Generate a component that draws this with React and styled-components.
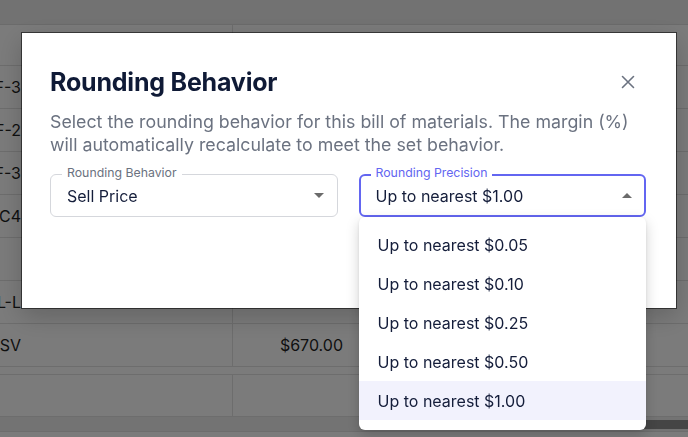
import React from 'react';
import styled, { createGlobalStyle } from 'styled-components';

const GlobalStyle = createGlobalStyle`
    html, body {
        margin: 0;
        padding: 0;
        width: 688px;
        height: 437px;
        overflow: hidden;
        background: #f7f7f7;
        font-family: Inter, "Noto Sans", "Liberation Sans", sans-serif;
    }
`;

const StPage = styled.div`
    width: 688px;
    height: 437px;
    background: #f7f7f7;
`;

const StTopBand = styled.div`
    height: 24px;
    background: #e4e4e4;
    border-bottom: 1px solid #d6d6d6;
`;

const StRow = styled.div`
    display: grid;
    grid-template-columns: 21px 211px 123px 1fr;
    height: ${props => props.height || 42}px;
    background: ${props => props.bg || '#f7f7f7'};
    border-bottom: 1px solid #dadada;
    box-sizing: border-box;
`;

const StSkuTail = styled.div`
    display: flex;
    justify-content: flex-end;
    align-items: center;
    overflow: hidden;
    white-space: nowrap;
    font-size: 16px;
    color: #1f1f1f;
`;

const StCell = styled.div`
    display: flex;
    align-items: center;
    justify-content: flex-end;
    padding-right: 12px;
    font-size: 16px;
    color: #1f1f1f;
    border-left: ${props => (props.divider ? '1px solid #dadada' : 'none')};
`;

const StScrollTrack = styled.div`
    display: flex;
    height: 15px;
    background: #e6e6e6;
    border-bottom: 1px solid #dadada;
    align-items: flex-start;
    padding: 3px 0 0 400px;
    box-sizing: border-box;
`;

const StScrollThumb = styled.div`
    flex: 1;
    height: 9px;
    background: #8a8a8a;
`;

const StBackdrop = styled.div`
    position: fixed;
    inset: 0;
    background: rgba(0, 0, 0, 0.5);
    display: flex;
    align-items: flex-start;
    padding: 33px 0 0 22px;
`;

const StModal = styled.div`
    width: 654px;
    box-sizing: border-box;
    background: #ffffff;
    padding: 34px 30px 91px 28px;
    box-shadow: 0 0 0 1px rgba(0, 0, 0, 0.55), 0 8px 24px rgba(0, 0, 0, 0.2);
`;

const StHeader = styled.div`
    display: flex;
    align-items: center;
    justify-content: space-between;
    height: 30px;
`;

const StTitle = styled.h2`
    margin: 0;
    font-size: 25px;
    font-weight: 700;
    letter-spacing: -0.2px;
    color: #0f1a36;
`;

const StClose = styled.button`
    display: flex;
    align-items: center;
    justify-content: center;
    width: 28px;
    height: 28px;
    margin-right: 4px;
    padding: 0;
    border: none;
    background: none;
    color: #6b7280;
`;

const StDescription = styled.p`
    margin: 13px 0 0;
    font-size: 17.8px;
    line-height: 23px;
    color: #6b7280;
`;

const StFields = styled.div`
    display: flex;
    gap: 21px;
    margin-top: 18px;
`;

const StField = styled.div`
    position: relative;
    flex: 1;
`;

const StSelect = styled.div`
    display: flex;
    align-items: center;
    justify-content: space-between;
    height: 43px;
    box-sizing: border-box;
    padding: 0 ${props => (props.open ? 12 : 13)}px 0 ${props => (props.open ? 15 : 16)}px;
    border: ${props => (props.open ? '2px solid #6366f1' : '1px solid #d5d7dc')};
    border-radius: 6px;
    font-size: 16px;
    color: #141d3a;
`;

const StLabel = styled.span`
    position: absolute;
    top: -9px;
    left: 12px;
    padding: 0 5px;
    background: #ffffff;
    font-size: 12.3px;
    line-height: 15px;
    color: ${props => (props.active ? '#6366f1' : '#6b7280')};
`;

const StArrow = styled.span`
    width: 0;
    height: 0;
    border-left: 5px solid transparent;
    border-right: 5px solid transparent;
    ${props => (props.up ? 'border-bottom: 5px solid #6b6b6b;' : 'border-top: 5px solid #6b6b6b;')}
`;

const StMenu = styled.ul`
    position: absolute;
    top: 100%;
    left: 0;
    right: 0;
    margin: 0;
    padding: 8px 0 10px;
    list-style: none;
    background: #ffffff;
    border-radius: 6px;
    box-shadow: 0 5px 14px rgba(0, 0, 0, 0.18), 0 1px 3px rgba(0, 0, 0, 0.08);
    z-index: 2;
`;

const StOption = styled.li`
    height: 39px;
    display: flex;
    align-items: center;
    padding-left: 19px;
    font-size: 16px;
    color: #141d3a;
    background: ${props => (props.selected ? '#f2f2fd' : 'transparent')};
`;

const rows = [
    { sku: '' },
    { sku: 'BRF-3' },
    { sku: 'BRF-2' },
    { sku: 'BRF-3' },
    { sku: 'PC4' },
    { sku: '' },
    { sku: 'L-L' },
    { sku: 'PSV', price: '$670.00' },
];

const options = ['$0.05', '$0.10', '$0.25', '$0.50', '$1.00'];

const CloseIcon = () => (
    <svg width="14" height="14" viewBox="0 0 14 14" fill="none">
        <path d="M1.5 1.5L12.5 12.5M12.5 1.5L1.5 12.5" stroke="currentColor" strokeWidth="1.6" strokeLinecap="round" />
    </svg>
);

const App = () => {
    const selected = '$1.00';

    return (
        <StPage>
            <GlobalStyle />
            <StTopBand />
            {rows.map((row, i) => (
                <StRow key={i} height={i === 0 ? 41 : 43}>
                    <StSkuTail>{row.sku}</StSkuTail>
                    <div />
                    <StCell divider>{row.price}</StCell>
                    <div />
                </StRow>
            ))}
            <StRow height={8} />
            <StRow height={42}>
                <div />
                <div />
                <StCell divider />
                <div />
            </StRow>
            <StScrollTrack>
                <StScrollThumb />
            </StScrollTrack>

            <StBackdrop>
                <StModal>
                    <StHeader>
                        <StTitle>Rounding Behavior</StTitle>
                        <StClose aria-label="Close">
                            <CloseIcon />
                        </StClose>
                    </StHeader>
                    <StDescription>
                        Select the rounding behavior for this bill of materials. The margin (%) will automatically
                        recalculate to meet the set behavior.
                    </StDescription>
                    <StFields>
                        <StField>
                            <StLabel>Rounding Behavior</StLabel>
                            <StSelect>
                                <span>Sell Price</span>
                                <StArrow />
                            </StSelect>
                        </StField>
                        <StField>
                            <StLabel active>Rounding Precision</StLabel>
                            <StSelect open>
                                <span>Up to nearest {selected}</span>
                                <StArrow up />
                            </StSelect>
                            <StMenu>
                                {options.map(opt => (
                                    <StOption key={opt} selected={opt === selected}>
                                        Up to nearest {opt}
                                    </StOption>
                                ))}
                            </StMenu>
                        </StField>
                    </StFields>
                </StModal>
            </StBackdrop>
        </StPage>
    );
};

export default App;
